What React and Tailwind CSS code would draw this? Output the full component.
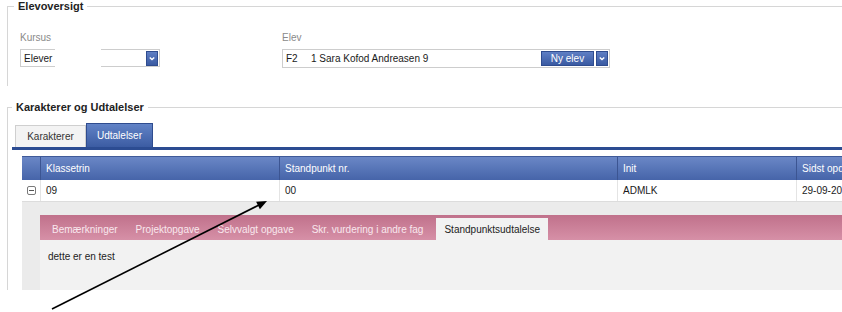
import React from "react";

const Chevron = () => (
  <svg width="12" height="15" viewBox="0 0 12 15">
    <path d="M3.3 6.2 L6 8.8 L8.7 6.2" fill="none" stroke="#ffffff" strokeWidth="1.7" />
  </svg>
);

const DropButton = () => (
  <div className="w-[12px] h-[15px] bg-gradient-to-b from-[#5f7fc4] to-[#3a5aa2] border border-[#2f4c8f] flex items-center justify-center">
    <Chevron />
  </div>
);

const columns = [
  { label: "Klassetrin", value: "09" },
  { label: "Standpunkt nr.", value: "00" },
  { label: "Init", value: "ADMLK" },
  { label: "Sidst opdateret", value: "29-09-2014" },
];

const subTabs = [
  "Bemærkninger",
  "Projektopgave",
  "Selvvalgt opgave",
  "Skr. vurdering i andre fag",
];

export default function App() {
  return (
    <div className="relative w-[842px] h-[312px] overflow-hidden bg-white font-['Liberation_Sans',Arial,sans-serif] text-[10px] text-[#1a1a1a]">
      {/* Elevoversigt */}
      <fieldset className="ml-[7px] w-[900px] h-[86px] border-t border-l border-[#d6d6d6]">
        <legend className="ml-[6px] px-[4px] text-[11px] leading-[13px] font-bold text-[#222]">
          Elevoversigt
        </legend>
        <div className="flex pl-[12px] pt-[18px]">
          <div className="w-[140px]">
            <div className="h-[14px] leading-[14px] text-[#8a8a8a]">Kursus</div>
            <div className="relative mt-[4px] h-[18px] border border-[#cdcdcd] flex items-center pl-[3px] pr-[1px]">
              <span className="flex-1 whitespace-nowrap overflow-hidden">Elever 2</span>
              <DropButton />
              <div className="absolute left-[34px] top-[-2px] w-[46px] h-[22px] bg-white" />
            </div>
          </div>
          <div className="ml-[122px] w-[328px]">
            <div className="h-[14px] leading-[14px] text-[#8a8a8a]">Elev</div>
            <div className="mt-[4px] h-[19px] border border-[#cdcdcd] flex items-center pl-[3px] pr-[1px]">
              <span className="w-[25px]">F2</span>
              <span className="flex-1">1 Sara Kofod Andreasen 9</span>
              <div className="w-[53px] h-[15px] bg-gradient-to-b from-[#5f7fc4] to-[#3a5aa2] border border-[#2f4c8f] text-white flex items-center justify-center">
                Ny elev
              </div>
              <div className="ml-[2px]">
                <DropButton />
              </div>
            </div>
          </div>
        </div>
      </fieldset>

      {/* Karakterer og Udtalelser */}
      <fieldset className="mt-[15px] ml-[7px] w-[900px] border-t border-l border-[#d6d6d6]">
        <legend className="ml-[4px] px-[4px] text-[11px] leading-[13px] font-bold text-[#222]">
          Karakterer og Udtalelser
        </legend>
        <div className="pl-[4px] pt-[9px]">
          <div className="flex items-end pl-[3px] h-[24px]">
            <div className="w-[71px] h-[22px] bg-[#f3f3f3] border border-b-0 border-[#cfcfcf] text-[#333] flex items-center justify-center">
              Karakterer
            </div>
            <div className="w-[67px] h-[24px] bg-gradient-to-b from-[#6283c6] to-[#3c5ca3] border border-b-0 border-[#2f4c8f] text-white flex items-center justify-center">
              Udtalelser
            </div>
          </div>
          <div className="h-[3px] bg-[#2c4c92]" />

          <div className="pl-[10px] pt-[6px]">
            {/* header */}
            <div className="grid grid-cols-[18px_239px_338px_179px_200px] h-[24px] bg-gradient-to-b from-[#6a87c6] to-[#4664a9] text-white border-t border-[#3f5a99]">
              <div />
              {columns.map((c) => (
                <div key={c.label} className="border-l border-[#3c5592] pl-[5px] flex items-center whitespace-nowrap">
                  {c.label}
                </div>
              ))}
            </div>
            {/* row */}
            <div className="grid grid-cols-[18px_239px_338px_179px_200px] h-[22px] bg-white border-b border-[#dcdcdc]">
              <div className="flex items-center justify-center">
                <div className="w-[9px] h-[9px] border border-[#7a7a7a] rounded-[2px] flex items-center justify-center">
                  <div className="w-[5px] h-px bg-[#555]" />
                </div>
              </div>
              {columns.map((c) => (
                <div key={c.label} className="border-l border-[#e4e4e4] pl-[5px] flex items-center whitespace-nowrap">
                  {c.value}
                </div>
              ))}
            </div>

            {/* detail */}
            <div className="h-[88px] bg-[#ebebeb] pl-[18px] pt-[13px]">
              <div className="h-[25px] bg-gradient-to-b from-[#c0718b] to-[#d690a7] flex items-end pl-[3px]">
                {subTabs.map((t) => (
                  <div key={t} className="h-[22px] px-[9px] flex items-center text-[#f9e8ee] whitespace-nowrap">
                    {t}
                  </div>
                ))}
                <div className="ml-[4px] h-[22px] px-[8px] bg-[#f2f2f2] text-[#222] flex items-center whitespace-nowrap">
                  Standpunktsudtalelse
                </div>
              </div>
              <div className="h-[50px] bg-[#f2f2f2] pl-[8px] pt-[9px] text-[#222]">dette er en test</div>
            </div>
          </div>
        </div>
      </fieldset>

      {/* annotation arrow */}
      <svg className="absolute left-0 top-0 pointer-events-none" width="842" height="312" viewBox="0 0 842 312">
        <line x1="52" y1="309" x2="259" y2="205" stroke="#000" strokeWidth="1.6" />
        <polygon points="267,201 259.9,209.3 256.1,201.7" fill="#000" />
      </svg>
    </div>
  );
}
